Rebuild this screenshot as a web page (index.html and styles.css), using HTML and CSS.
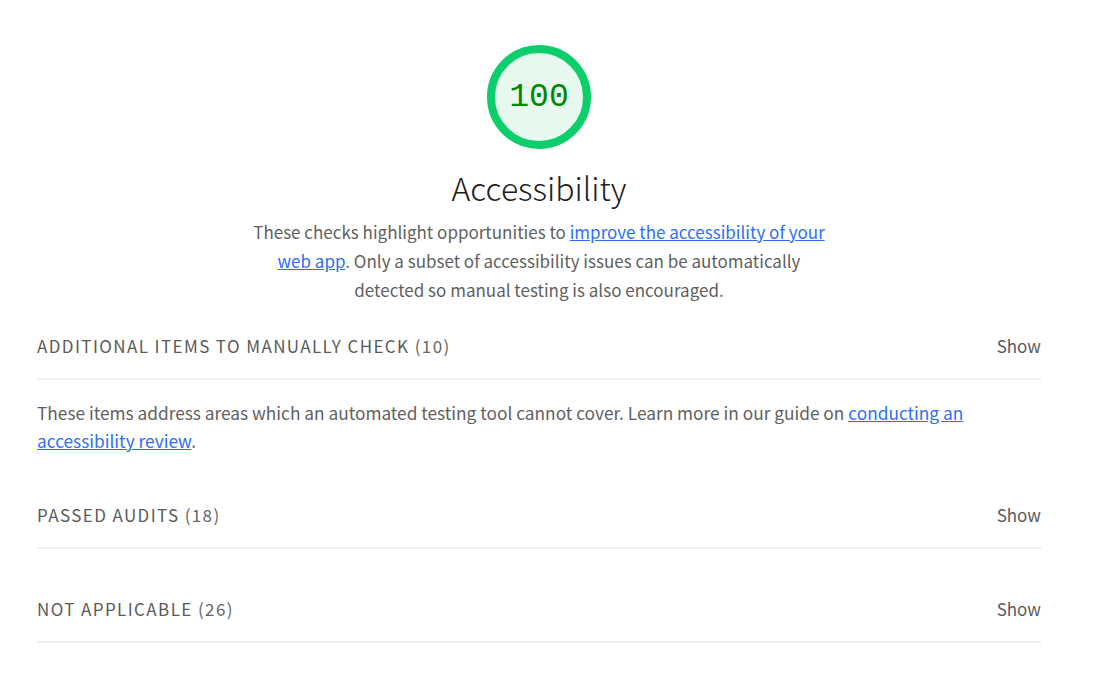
FILE: index.html
```html
<!DOCTYPE html>
<html>
<head>
<meta charset="utf-8">
<link rel="stylesheet" href="styles.css">
</head>
<body>
<div class="page">
  <div class="category-header">
    <div class="gauge">
      <svg class="gauge-svg" viewBox="0 0 104 104" width="104" height="104">
        <circle cx="52" cy="52" r="48" fill="#e7f9ef" stroke="#0cce6b" stroke-width="8"/>
      </svg>
      <span class="gauge-value">100</span>
    </div>
    <h1 class="title">Accessibility</h1>
    <p class="desc">These checks highlight opportunities to <a href="#">improve the accessibility of your web app</a>. Only a subset of accessibility issues can be automatically detected so manual testing is also encouraged.</p>
  </div>

  <div class="group group-first">
    <div class="group-header">
      <span class="group-title">Additional items to manually check <span class="count">(10)</span></span>
      <span class="show">Show</span>
    </div>
    <p class="group-desc">These items address areas which an automated testing tool cannot cover. Learn more in our guide on <a href="#">conducting an accessibility review</a>.</p>
  </div>

  <div class="group">
    <div class="group-header">
      <span class="group-title">Passed audits <span class="count">(18)</span></span>
      <span class="show">Show</span>
    </div>
  </div>

  <div class="group">
    <div class="group-header">
      <span class="group-title">Not applicable <span class="count">(26)</span></span>
      <span class="show">Show</span>
    </div>
  </div>
</div>
</body>
</html>
```

FILE: styles.css
```css
html, body {
  margin: 0;
  padding: 0;
  background: #ffffff;
}
body {
  font-family: "Noto Sans CJK KR", "Noto Sans", sans-serif;
  color: #212121;
}
.page {
  width: 1004px;
  padding: 45px 0 0 37px;
}
.category-header {
  display: flex;
  flex-direction: column;
  align-items: center;
}
.gauge {
  position: relative;
  width: 104px;
  height: 104px;
}
.gauge-svg {
  display: block;
}
.gauge-value {
  position: absolute;
  inset: 0;
  display: flex;
  align-items: center;
  justify-content: center;
  font-family: "Liberation Mono", monospace;
  font-size: 33px;
  color: #008800;
}
.title {
  margin: 18px 0 0;
  font-size: 32px;
  line-height: 40px;
  font-weight: 300;
  color: #212121;
}
.desc {
  margin: 10px 0 0;
  width: 590px;
  text-align: center;
  font-size: 17px;
  line-height: 29px;
  color: #5f5f5f;
}
a {
  color: #2d6ff3;
  text-decoration: underline;
}
.group {
  margin-top: 28px;
}
.group-first {
  margin-top: 10px;
}
.group-header {
  display: flex;
  justify-content: space-between;
  align-items: center;
  padding: 20px 0;
  line-height: 24px;
  border-bottom: 2px solid #efefef;
}
.group-title {
  text-transform: uppercase;
  font-size: 17px;
  letter-spacing: 1.4px;
  color: #5a5a5a;
}
.count {
  color: #666666;
}
.show {
  font-size: 17px;
  color: #5a5a5a;
}
.group-desc {
  margin: 19px 0 0;
  font-size: 17.3px;
  line-height: 28px;
  color: #616161;
}
```
